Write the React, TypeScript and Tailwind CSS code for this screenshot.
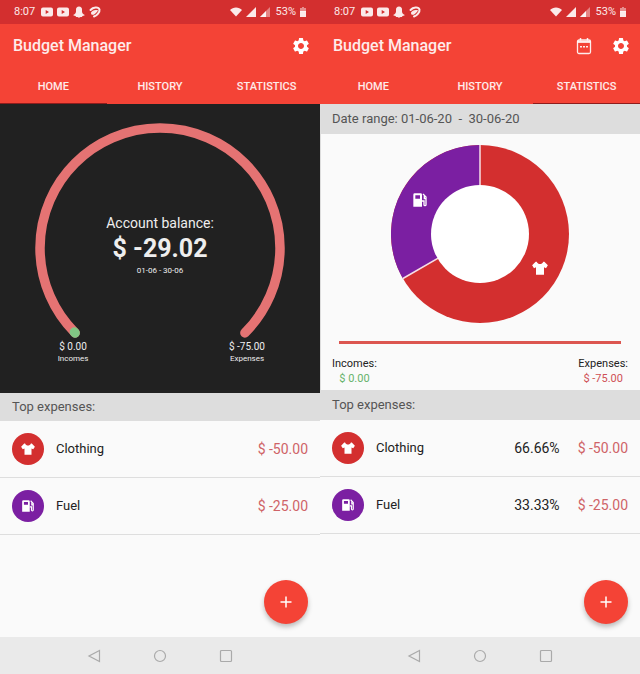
import React, { type ReactNode } from "react";
import { MdSettings } from "react-icons/md";

type IconProps = { className?: string };

function ShirtIcon({ className }: IconProps) {
  return (
    <svg viewBox="0 0 24 24" fill="currentColor" className={className} aria-hidden="true">
      <path d="M7 2.500c1 2.500 3 3.500 5 3.500s4-1 5-3.500h1.500L23.800 8 21 12.500l-3-1.500V22H6V11l-3 1.500L.2 8l5.300-5.500Z" />
    </svg>
  );
}

function FuelIcon({ className }: IconProps) {
  return (
    <svg viewBox="0 0 24 24" className={className} aria-hidden="true">
      <path fill="currentColor" fillRule="evenodd" d="M4 2h9a2 2 0 0 1 2 2v18H2V4a2 2 0 0 1 2-2Zm1 3v5h7V5Z" />
      <path fill="none" stroke="currentColor" strokeWidth="2" d="m16.500 3 4.500 4.500V19a1.500 1.500 0 0 1-3 0v-5.500h-3M21 10h-2.500V6" />
    </svg>
  );
}

function CalendarIcon() {
  return (
    <svg viewBox="0 0 18 18" className="size-[18px]" fill="none" stroke="currentColor" aria-hidden="true">
      <rect x="2.500" y="3" width="13" height="13.500" rx="1.500" strokeWidth="1.300" />
      <path d="M2.500 4.800h13" strokeWidth="2.200" />
      <path d="M5.500 1v2.500M12.500 1v2.500" strokeWidth="1.500" />
      <path d="M5 9.800h2M8 9.800h2M11 9.800h2" strokeWidth="1.500" />
    </svg>
  );
}

function VideoIcon() {
  return (
    <svg viewBox="0 0 12 10" className="h-2.5 w-3" fill="currentColor" aria-hidden="true">
      <path fillRule="evenodd" d="M2 .5h8a2 2 0 0 1 2 2v5a2 2 0 0 1-2 2H2a2 2 0 0 1-2-2v-5a2 2 0 0 1 2-2Zm2.700 2.500v4L8 5Z" />
    </svg>
  );
}

function GhostIcon() {
  return (
    <svg viewBox="0 0 12 12" className="size-3" fill="currentColor" aria-hidden="true">
      <path d="M6 .5c2 0 3 1.400 3 3v2c0 1.500 1 2.600 2.500 3.200v.8l-2 .5-.6.900H7.500L6 11.700 4.500 10.900H3.100L2.500 10l-2-.5v-.8C2 8.100 3 7 3 5.500v-2c0-1.600 1-3 3-3Z" />
    </svg>
  );
}

function AirtelIcon() {
  return (
    <svg viewBox="0 0 24 24" className="size-3" fill="none" stroke="currentColor" strokeWidth="4" strokeLinecap="round" aria-hidden="true">
      <path d="M3 8C8 2 19 1 21 7c1 5-5 12-11 14M15 10c-4-1-10 3-9 5 2 2 6-1 9-5Z" />
    </svg>
  );
}

function StatusBar() {
  return (
    <div className="flex h-6 items-center justify-between bg-[#d32f2f] px-3.5 text-[11px] text-white/90">
      <div className="flex items-center gap-1">
        <span className="mr-0.5">8:07</span>
        <VideoIcon />
        <VideoIcon />
        <GhostIcon />
        <AirtelIcon />
      </div>
      <div className="flex items-center gap-1">
        <svg viewBox="0 0 12 10" className="h-2.5 w-3" fill="currentColor" aria-hidden="true">
          <path d="M0 3C3-.5 9-.5 12 3L6 9.500Z" />
        </svg>
        <svg viewBox="0 0 10 10" className="size-2.5" fill="currentColor" aria-hidden="true">
          <path d="M10 0v10H0Z" />
        </svg>
        <svg viewBox="0 0 10 10" className="size-2.5" fill="currentColor" aria-hidden="true">
          <path opacity=".45" d="M10 0v10H0Z" />
          <path d="M6 4v6H0Z" />
        </svg>
        <span className="ml-0.5">53%</span>
        <svg viewBox="0 0 6 10" className="h-2.5 w-1.5" fill="currentColor" aria-hidden="true">
          <path opacity=".5" d="M2 0h2v1h2v4H0V1h2Z" />
          <path d="M0 4h6v6H0Z" />
        </svg>
      </div>
    </div>
  );
}

const tabs = ["HOME", "HISTORY", "STATISTICS"];

function AppBar({ active, calendar = false }: { active: string; calendar?: boolean }) {
  return (
    <header className="bg-[#f44336] text-white/90">
      <StatusBar />
      <div className="flex h-11 items-center justify-between px-[9px]">
        <h1 className="pl-1 text-base font-medium">Budget Manager</h1>
        <div className="flex items-center gap-[18px]">
          {calendar && (
            <button type="button" aria-label="Date range">
              <CalendarIcon />
            </button>
          )}
          <button type="button" aria-label="Settings" className="text-white">
            <MdSettings className="size-5" />
          </button>
        </div>
      </div>
      <div role="tablist" className="grid h-9 grid-cols-3 text-[11px] font-medium">
        {tabs.map((tab) => (
          <button
            key={tab}
            type="button"
            role="tab"
            aria-selected={tab === active}
            className={tab === active ? "border-b border-[#8e1c1c] pt-1" : "border-b border-transparent pt-1"}
          >
            {tab}
          </button>
        ))}
      </div>
    </header>
  );
}

const expenses = [
  { name: "Clothing", percent: "66.66%", amount: "$ -50.00", color: "bg-[#d32f2f]", Icon: ShirtIcon },
  { name: "Fuel", percent: "33.33%", amount: "$ -25.00", color: "bg-[#7b1fa2]", Icon: FuelIcon },
];

function ExpenseList({ percentages = false }: { percentages?: boolean }) {
  return (
    <ul className="text-sm">
      {expenses.map(({ name, percent, amount, color, Icon }) => (
        <li key={name} className="flex h-[57px] items-center border-b border-[#dedede] px-3">
          <span className={`flex size-8 items-center justify-center rounded-full text-white ${color}`}>
            <Icon className="size-3.5" />
          </span>
          <span className="ml-3 flex-1 text-[13px] text-[#222]">{name}</span>
          {percentages && <span className="mr-[18px] text-[#222]">{percent}</span>}
          <span className="text-[#cf6367]">{amount}</span>
        </li>
      ))}
    </ul>
  );
}

function NavBar() {
  return (
    <nav className="flex h-[37px] items-center justify-center gap-[52px] bg-[#eaeaea] text-[#aaa]">
      <button type="button" aria-label="Back">
        <svg viewBox="0 0 14 14" className="size-3.5" fill="none" stroke="currentColor" strokeWidth="1.200" aria-hidden="true">
          <path d="M12.500 1.500v11L2 7Z" />
        </svg>
      </button>
      <button type="button" aria-label="Home">
        <svg viewBox="0 0 14 14" className="size-3.5" fill="none" stroke="currentColor" strokeWidth="1.200" aria-hidden="true">
          <circle cx="7" cy="7" r="5.500" />
        </svg>
      </button>
      <button type="button" aria-label="Recent apps">
        <svg viewBox="0 0 14 14" className="size-3.5" fill="none" stroke="currentColor" strokeWidth="1.200" aria-hidden="true">
          <rect x="1.500" y="1.500" width="11" height="11" rx="1" />
        </svg>
      </button>
    </nav>
  );
}

function Phone({ children }: { children: ReactNode }) {
  return (
    <section className="relative flex min-w-0 flex-col bg-[#fafafa]">
      <div className="flex-1">{children}</div>
      <button
        type="button"
        aria-label="Add transaction"
        className="absolute right-3 bottom-[50px] flex size-11 items-center justify-center rounded-full bg-[#f44336] text-white shadow-[0_3px_5px_rgba(0,0,0,0.25)]"
      >
        <svg viewBox="0 0 12 12" className="size-3" stroke="currentColor" strokeWidth="1.500" aria-hidden="true">
          <path d="M6 .5v11M.5 6h11" />
        </svg>
      </button>
      <NavBar />
    </section>
  );
}

function BalanceGauge() {
  return (
    <div className="h-[289px] bg-[#212121] pt-[19px] text-[#eee]">
      <div className="mx-auto w-[250px]">
        <div className="grid">
          <svg viewBox="0 0 250 216" className="col-start-1 row-start-1 w-full" fill="none" strokeLinecap="round" aria-hidden="true">
            <path d="M40.100 209.900A120 120 0 1 1 209.900 209.900" stroke="#e57373" strokeWidth="9.500" />
            <path d="M39.400 209.100l.7.8" stroke="#81c784" strokeWidth="9.500" />
          </svg>
          <div className="col-start-1 row-start-1 pt-[90px] text-center">
            <p className="text-sm leading-5">Account balance:</p>
            <p className="text-[25px] leading-8 font-bold">$ -29.02</p>
            <p className="text-[8px] leading-3">01-06 - 30-06</p>
          </div>
        </div>
        <div className="flex justify-between text-center leading-3">
          <p className="w-19 pt-0.5 text-[10px]">
            $ 0.00
            <span className="block text-[8px]">Incomes</span>
          </p>
          <p className="w-19 pt-0.5 text-[10px]">
            $ -75.00
            <span className="block text-[8px]">Expenses</span>
          </p>
        </div>
      </div>
    </div>
  );
}

function ExpenseDonut() {
  return (
    <div className="h-64 px-3 pt-[11px] shadow-[inset_1px_0_#ddd]">
      <svg viewBox="0 0 178 178" className="mx-auto size-[178px]" role="img" aria-label="Expenses by category">
        <circle cx="89" cy="89" r="89" fill="#d32f2f" />
        <path d="M89 89V0A89 89 0 0 0 11.900 133.500Z" fill="#7b1fa2" />
        <path d="M89 0v89L11.900 133.500" fill="none" stroke="#f7dfe5" strokeWidth="1.500" />
        <circle cx="89" cy="89" r="49" fill="#fff" />
        <svg x="21" y="47" width="16" height="16" className="text-white">
          <FuelIcon />
        </svg>
        <svg x="141" y="115" width="16" height="16" className="text-white">
          <ShirtIcon />
        </svg>
      </svg>
      <div className="mx-[7px] mt-[18px] h-[3px] bg-[#dc5650]" />
      <div className="mt-3 flex justify-between text-center text-[11px] leading-[15px]">
        <p className="text-[#222]">
          Incomes:
          <span className="block text-[#66b36a]">$ 0.00</span>
        </p>
        <p className="text-[#222]">
          Expenses:
          <span className="block text-[#cf5055]">$ -75.00</span>
        </p>
      </div>
    </div>
  );
}

export default function App() {
  return (
    <main className="grid min-h-screen grid-cols-2 font-['Roboto','Liberation_Sans',sans-serif]">
      <Phone>
        <AppBar active="HOME" />
        <BalanceGauge />
        <h2 className="flex h-7 items-center bg-[#ddd] px-3 text-[13px] text-[#555]">Top expenses:</h2>
        <ExpenseList />
      </Phone>
      <Phone>
        <AppBar active="STATISTICS" calendar />
        <p className="flex h-[30px] items-center bg-[#ddd] px-3 text-[13px] whitespace-pre text-[#555]">
          Date range: 01-06-20{"  -  "}30-06-20
        </p>
        <ExpenseDonut />
        <h2 className="flex h-[30px] items-center bg-[#ddd] px-3 text-[13px] text-[#555]">Top expenses:</h2>
        <ExpenseList percentages />
      </Phone>
    </main>
  );
}
